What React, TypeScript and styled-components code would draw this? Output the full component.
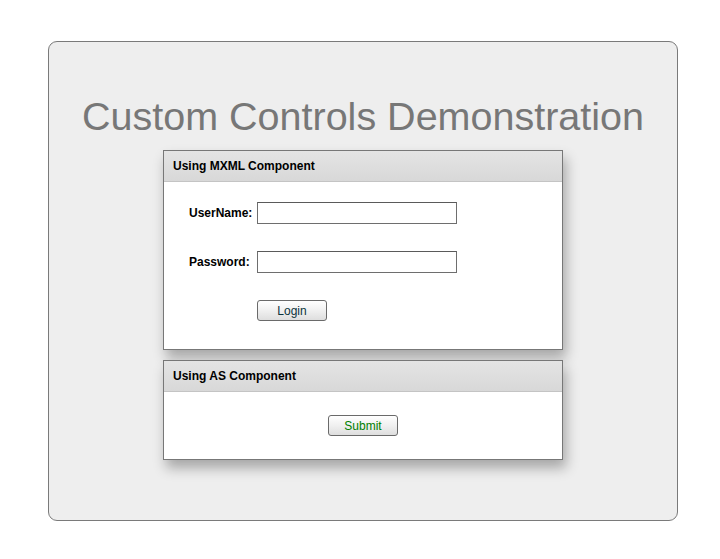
import { FC, ReactNode } from 'react';
import styled, { createGlobalStyle } from 'styled-components';

const GlobalStyle = createGlobalStyle`
  html, body {
    margin: 0;
    padding: 0;
    background: #ffffff;
    font-family: 'Liberation Sans', Arial, sans-serif;
  }
`;

type PanelProps = {
  title: string;
  children: ReactNode;
};

const Panel: FC<PanelProps> = ({ title, children }) => (
  <PanelWrap>
    <PanelHeader>{title}</PanelHeader>
    {children}
  </PanelWrap>
);

const App: FC = () => {
  return (
    <>
      <GlobalStyle />
      <Page>
        <Application>
          <Title>Custom Controls Demonstration</Title>
          <Panels>
            <Panel title="Using MXML Component">
              <LoginForm>
                <FormRow>
                  <FieldLabel>UserName:</FieldLabel>
                  <TextInput type="text" />
                </FormRow>
                <FormRow>
                  <FieldLabel>Password:</FieldLabel>
                  <TextInput type="password" />
                </FormRow>
                <FormRow>
                  <FieldLabel />
                  <FlexButton>Login</FlexButton>
                </FormRow>
              </LoginForm>
            </Panel>
            <Panel title="Using AS Component">
              <CenterBody>
                <FlexButton className="green">Submit</FlexButton>
              </CenterBody>
            </Panel>
          </Panels>
        </Application>
      </Page>
    </>
  );
};

export default App;

const Page = styled.div`
  padding: 41px 0 0 48px;
`;

const Application = styled.div`
  box-sizing: border-box;
  width: 630px;
  height: 480px;
  background-color: #eeeeee;
  border: 1px solid #7a7a7a;
  border-radius: 9px;
  display: flex;
  flex-direction: column;
  align-items: center;
  padding-top: 53px;
`;

const Title = styled.h1`
  margin: 0 0 13px;
  font-size: 39.5px;
  line-height: 42px;
  font-weight: normal;
  color: #777777;
  white-space: nowrap;
`;

const Panels = styled.div`
  display: flex;
  flex-direction: column;
  gap: 10px;
`;

const PanelWrap = styled.div`
  box-sizing: border-box;
  width: 400px;
  background-color: #ffffff;
  border: 1px solid #777777;
  box-shadow: 3px 8px 12px rgba(0, 0, 0, 0.3);
`;

const PanelHeader = styled.div`
  height: 30px;
  padding-left: 9px;
  display: flex;
  align-items: center;
  background: linear-gradient(#e4e4e4, #d8d8d8);
  border-bottom: 1px solid #c4c4c4;
  font-size: 12px;
  font-weight: bold;
  color: #000000;
`;

const LoginForm = styled.div`
  display: flex;
  flex-direction: column;
  gap: 27px;
  padding: 20px 0 28px 25px;
`;

const FormRow = styled.div`
  display: flex;
  align-items: center;
`;

const FieldLabel = styled.label`
  width: 68px;
  font-size: 12px;
  font-weight: bold;
  color: #000000;
`;

const TextInput = styled.input`
  box-sizing: border-box;
  width: 200px;
  height: 22px;
  margin: 0;
  padding: 2px 4px;
  border: 1px solid #6e6e6e;
  border-top-color: #5a5a5a;
  background: #ffffff;
  font-family: 'Liberation Sans', Arial, sans-serif;
  font-size: 12px;
  outline: none;
`;

const FlexButton = styled.button`
  box-sizing: border-box;
  width: 70px;
  height: 21px;
  margin: 0;
  padding: 0;
  border: 1px solid #6a6a6a;
  border-radius: 3px;
  background: linear-gradient(#ffffff, #f0f0f0 50%, #dedede);
  font-family: 'Liberation Sans', Arial, sans-serif;
  font-size: 12px;
  color: #0b333c;

  &.green {
    color: #008000;
  }
`;

const CenterBody = styled.div`
  display: flex;
  justify-content: center;
  padding: 23px 0 23px;
`;
